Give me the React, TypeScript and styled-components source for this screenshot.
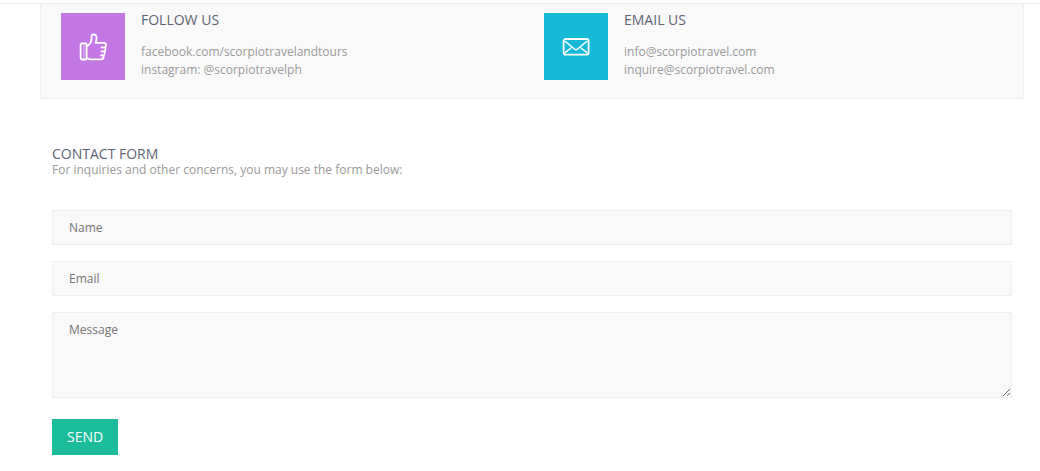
import React from "react";
import styled, { createGlobalStyle } from "styled-components";

const GlobalStyle = createGlobalStyle`
  *, *::before, *::after { box-sizing: border-box; }
  body {
    margin: 0;
    background: #fff;
    color: #999;
    font: 400 12px/18px "Open Sans", sans-serif;
  }
`;

const Page = styled.main`
  margin-top: 3px;
  border-top: 1px solid #eee;
`;

const Container = styled.div`
  margin: 0 16px 0 40px;
`;

const ContactPanel = styled.section`
  display: grid;
  grid-template-columns: 1fr 1fr;
  padding: 9px 8px 18px;
  background: #f9f9f9;
  border: 1px solid #eee;
  border-top: 0;
`;

const ContactItem = styled.div`
  display: flex;
  gap: 16px;
  padding-left: 12px;
`;

const IconTile = styled.div<{ $color: string }>`
  display: flex;
  align-items: center;
  justify-content: center;
  flex: none;
  width: 64px;
  height: 67px;
  background: ${({ $color }) => $color};
`;

const Heading = styled.h2`
  margin: 0;
  color: #5e6373;
  font-size: 14px;
  font-weight: 400;
  line-height: 14px;
`;

const Lines = styled.p`
  margin: 16px 0 0;
`;

const FormSection = styled.section`
  padding: 48px 12px 16px;
`;

const Intro = styled.p`
  margin: 0 0 31px;
`;

const Form = styled.form`
  display: flex;
  flex-direction: column;
  align-items: flex-start;
  gap: 16px;
`;

const Field = styled.input`
  display: block;
  width: 100%;
  height: 35px;
  margin: 0;
  padding: 8px 16px;
  background: #f9f9f9;
  border: 1px solid #eee;
  border-radius: 0;
  color: #555;
  font: inherit;
  &::placeholder { color: #757575; opacity: 1; }
`;

const MessageField = styled(Field)`
  height: 86px;
  resize: vertical;
`;

const SendButton = styled.button`
  margin-top: 5px;
  padding: 8px 15px;
  border: 0;
  background: #1abc9c;
  color: #fff;
  font: 400 14px/20px "Open Sans", sans-serif;
  cursor: pointer;
`;

const ThumbIcon = () => (
  <svg width="28" height="28" viewBox="0 0 28 28" fill="none" stroke="#fff" strokeWidth="1.8" strokeLinejoin="round" strokeLinecap="round" aria-hidden="true">
    <path d="M6.6 10.4H3.2Q1.6 10.4 1.6 12V25Q1.6 26.5 3.2 26.5H6.6Q7.6 26.5 7.6 25V11.6Q7.6 10.4 6.6 10.4Z" />
    <path d="M5 11V26" strokeWidth="1" opacity="0.5" />
    <path d="M7.6 13.5C10.5 12 12.6 8.6 12.6 4.8V3.2Q12.8 1.4 14.6 1.4Q17.6 1.4 17.6 5.2Q17.6 7.8 16.6 9.8H24.8Q26.9 9.8 26.9 12Q26.9 13.4 26.3 14.4H22.5M26.3 14.4Q26.8 16.8 25.8 18.4H22.5M25.8 18.4Q26 20.8 24.8 22.4H22M24.8 22.4Q24.6 26.4 22 26.4H11.5Q9.5 26.2 7.6 24.8" />
  </svg>
);

const MailIcon = () => (
  <svg width="28" height="20" viewBox="0 0 28 20" fill="none" stroke="#fff" strokeWidth="1.8" strokeLinejoin="round" strokeLinecap="round" aria-hidden="true">
    <rect x="1.6" y="2" width="25" height="15.6" rx="2" />
    <path d="M3.2 4.4L12.4 12Q14 13.4 15.6 12L24.8 4.4M3.4 15.4L9 11M24.6 15.4L19 11" strokeWidth="1.4" />
  </svg>
);

export default function App() {
  return (
    <>
      <GlobalStyle />
      <Page>
        <Container>
          <ContactPanel>
            <ContactItem>
              <IconTile $color="#c377e4"><ThumbIcon /></IconTile>
              <div>
                <Heading>FOLLOW US</Heading>
                <Lines>facebook.com/scorpiotravelandtours<br />instagram: @scorpiotravelph</Lines>
              </div>
            </ContactItem>
            <ContactItem>
              <IconTile $color="#16b9d8"><MailIcon /></IconTile>
              <div>
                <Heading>EMAIL US</Heading>
                <Lines>info@scorpiotravel.com<br />inquire@scorpiotravel.com</Lines>
              </div>
            </ContactItem>
          </ContactPanel>
          <FormSection>
            <Heading>CONTACT FORM</Heading>
            <Intro>For inquiries and other concerns, you may use the form below:</Intro>
            <Form onSubmit={(event) => event.preventDefault()}>
              <Field type="text" name="name" placeholder="Name" aria-label="Name" />
              <Field type="email" name="email" placeholder="Email" aria-label="Email" />
              <MessageField as="textarea" name="message" placeholder="Message" aria-label="Message" />
              <SendButton type="submit">SEND</SendButton>
            </Form>
          </FormSection>
        </Container>
      </Page>
    </>
  );
}
